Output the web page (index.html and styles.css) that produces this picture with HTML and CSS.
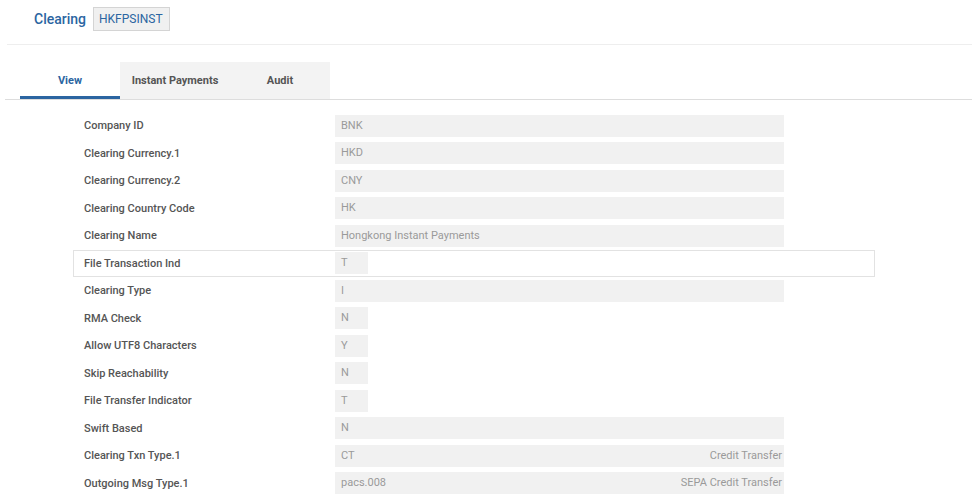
FILE: index.html
```html
<!DOCTYPE html>
<html lang="en">
<head>
  <meta charset="UTF-8">
  <title>Clearing - HKFPSINST</title>
  <link rel="stylesheet" href="styles.css">
</head>
<body>
  <div class="header">
    <span class="title">Clearing</span>
    <span class="badge">HKFPSINST</span>
  </div>

  <div class="tabs">
    <div class="tab active">View</div>
    <div class="tab tab-wide">Instant Payments</div>
    <div class="tab">Audit</div>
  </div>

  <div class="form">
    <div class="row"><label>Company ID</label><div class="field">BNK</div></div>
    <div class="row"><label>Clearing Currency.1</label><div class="field">HKD</div></div>
    <div class="row"><label>Clearing Currency.2</label><div class="field">CNY</div></div>
    <div class="row"><label>Clearing Country Code</label><div class="field">HK</div></div>
    <div class="row"><label>Clearing Name</label><div class="field">Hongkong Instant Payments</div></div>
    <div class="row focused"><label>File Transaction Ind</label><div class="field short">T</div></div>
    <div class="row"><label>Clearing Type</label><div class="field">I</div></div>
    <div class="row"><label>RMA Check</label><div class="field short">N</div></div>
    <div class="row"><label>Allow UTF8 Characters</label><div class="field short">Y</div></div>
    <div class="row"><label>Skip Reachability</label><div class="field short">N</div></div>
    <div class="row"><label>File Transfer Indicator</label><div class="field short">T</div></div>
    <div class="row"><label>Swift Based</label><div class="field">N</div></div>
    <div class="row"><label>Clearing Txn Type.1</label><div class="field split"><span>CT</span><span>Credit Transfer</span></div></div>
    <div class="row"><label>Outgoing Msg Type.1</label><div class="field split"><span>pacs.008</span><span>SEPA Credit Transfer</span></div></div>
  </div>
</body>
</html>
```

FILE: styles.css
```css
body {
  margin: 0;
  font-family: Roboto, 'Liberation Sans', sans-serif;
  background-color: #fff;
  color: #555;
}
.header {
  display: flex;
  align-items: center;
  gap: 7px;
  height: 45px;
  margin-left: 7px;
  padding-left: 27px;
  box-sizing: border-box;
  padding-bottom: 6px;
  border-bottom: 1px solid #eeeeee;
}
.title {
  font-size: 14px;
  font-weight: 500;
  color: #2b65a1;
}
.badge {
  font-size: 12px;
  color: #2b65a1;
  background-color: #f0f0f0;
  border: 1px solid #d4d4d4;
  padding: 0 6px 0 5px;
  height: 22px;
  line-height: 22px;
}
.tabs {
  display: flex;
  margin-top: 17px;
  margin-left: 5px;
  padding-left: 15px;
  border-bottom: 1px solid #dddddd;
}
.tab {
  width: 100px;
  height: 37px;
  line-height: 37px;
  text-align: center;
  font-size: 11px;
  font-weight: 700;
  color: #555;
  background-color: #f3f3f3;
}
.tab-wide {
  width: 110px;
}
.tab.active {
  background-color: #fff;
  color: #2b65a1;
  height: 34px;
  border-bottom: 3px solid #2b65a1;
}
.form {
  padding-top: 12px;
  margin-left: 73px;
}
.row {
  display: flex;
  align-items: center;
  width: 802px;
  height: 27.5px;
  padding-left: 11px;
  box-sizing: border-box;
  border: 1px solid transparent;
  border-left: 0;
}
.row.focused {
  border: 1px solid #e2e2e2;
  padding-left: 10px;
}
.row label {
  width: 251px;
  flex-shrink: 0;
  font-size: 11px;
  font-weight: 500;
  color: #555;
}
.field {
  width: 449px;
  height: 22px;
  line-height: 22px;
  padding: 0 2px 0 6px;
  box-sizing: border-box;
  background-color: #f1f1f1;
  font-size: 11px;
  color: #9a9a9a;
}
.field.short {
  width: 33px;
}
.field.split {
  display: flex;
  justify-content: space-between;
}
```
